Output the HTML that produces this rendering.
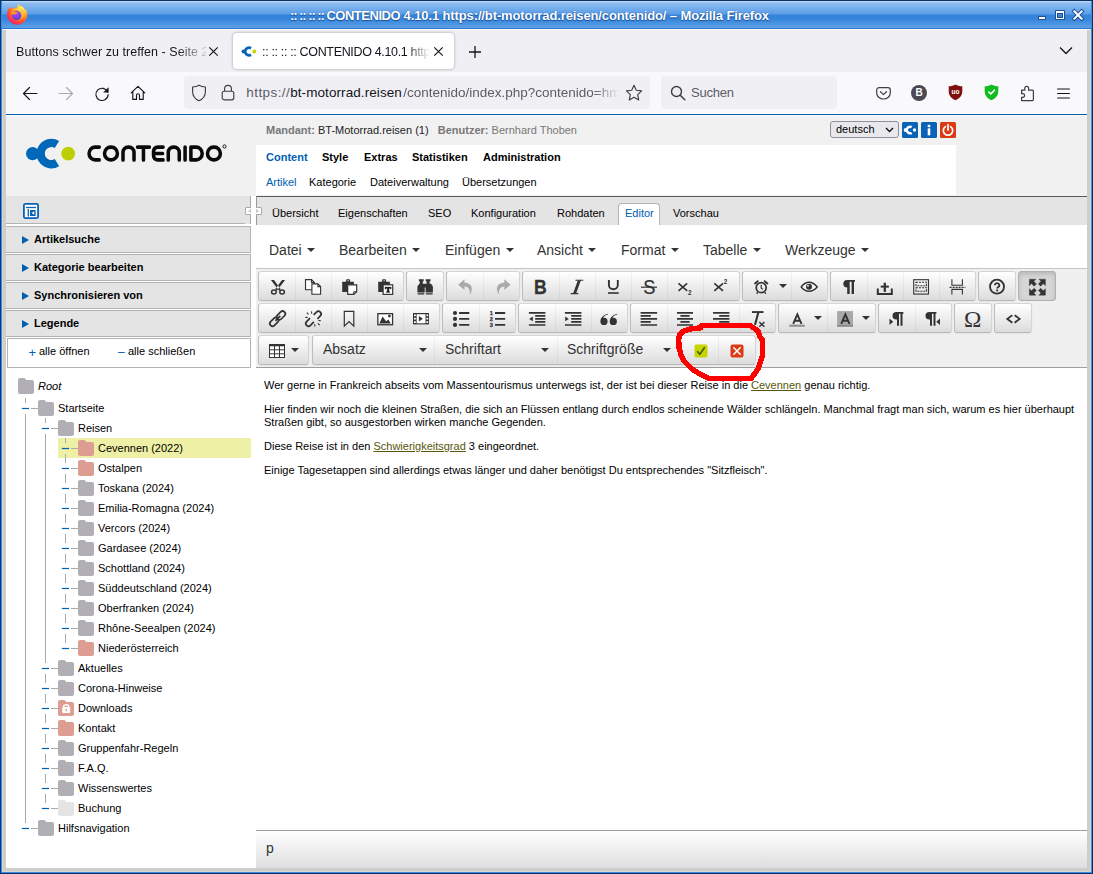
<!DOCTYPE html>
<html><head><meta charset="utf-8">
<style>
*{box-sizing:border-box;margin:0;padding:0}
html,body{width:1093px;height:874px;overflow:hidden;background:#fff;font-family:"Liberation Sans",sans-serif;}
.a{position:absolute}
#win{position:absolute;left:0;top:0;width:1093px;height:874px;background:#cdcdcd;overflow:hidden}
/* title bar */
#tb{left:0;top:0;width:1093px;height:30px;background:linear-gradient(#0b2f5e 0,#0b2f5e 1px,#cfe3f8 1px,#a5cbf4 2px,#8fbef1 3px,#5a9de8 14px,#3584db 15px,#3685dc 19px,#4d95e2 24px,#5e9fe6 28px,#2a7bd8 28px,#2a7bd8 29px,#fbf8f5 29px,#fbf8f5 30px)}
#ttl{left:290px;top:7px;text-align:left;color:#fff;font-weight:bold;font-size:13px;line-height:17px;text-shadow:0 1px 1px #1a4f94,0 0 1px #1a4f94;white-space:nowrap;letter-spacing:-.29px}
/* ff chrome */
#tabs{left:6px;top:30px;width:1081px;height:42px;background:#f0f0f4}
#nav{left:6px;top:72px;width:1081px;height:41px;background:#f9f9fb}
#navline{left:6px;top:113px;width:1081px;height:3px;background:linear-gradient(#fdfdfd 0,#fdfdfd 1px,#005bac 1px,#005bac 2px,#fdfbf7 2px);z-index:5}
.fft{font-size:13px;color:#15141a;white-space:nowrap;line-height:16px}
#atab{left:233px;top:33px;width:221px;height:36px;background:#fff;border-radius:4px;box-shadow:0 0 3px rgba(0,0,0,.36)}
#url{left:184px;top:76px;width:466px;height:33px;background:#f0f0f4;border-radius:4px}
#srch{left:661px;top:76px;width:176px;height:33px;background:#f0f0f4;border-radius:4px}
/* page */
#page{left:6px;top:115px;width:1081px;height:753px;background:#fff;overflow:hidden}

/* contenido */
#page{font-size:11px;color:#000}
#hdr{left:0;top:0;width:1081px;height:81px;background:#f1f1f1}
#hdrw{left:250px;top:30px;width:700px;height:50px;background:#fff}
.t11{font-size:11px;line-height:14px;white-space:nowrap}
.b{font-weight:bold}
.blue{color:#0060b1}
#lbar{left:0;top:81px;width:245px;height:28px;background:#e4e4e4}
.blk{left:0;width:245px;height:27px;background:#e4e4e4;border:1px solid #b3b3b3;border-left:0}
.blk i{position:absolute;left:16px;top:9px;width:0;height:0;border-left:7px solid #0060b1;border-top:4px solid transparent;border-bottom:4px solid transparent}
.blk b{position:absolute;left:28px;top:5px;font-size:11px;line-height:14px;white-space:nowrap}
#rtab{left:250px;top:81px;width:831px;height:29px;background:#e4e4e4;border-top:1px solid #5a5a5a;border-left:1px solid #9a9a9a}
.tab{top:91px;font-size:11px;line-height:14px;white-space:nowrap}
.fold{position:absolute;width:16px;height:16px}
.tl{position:absolute;font-size:11px;line-height:14px;white-space:nowrap;color:#000}
.vl{position:absolute;width:1px;background:#a9a9a9}
.hl{position:absolute;height:1px;background:#a9a9a9}
.mn{position:absolute;height:1px;width:7px;background:#0060b1;box-shadow:0 0 0 .3px rgba(0,96,177,.35)}

/* tinymce */
#mbar{left:250px;top:110px;width:831px;height:44px;background:#fff;border-bottom:1px solid #c5c5c5}
.mb{position:absolute;top:125px;font-size:14px;line-height:20px;color:#333;white-space:nowrap}
.car{display:inline-block;width:0;height:0;border-left:4px solid transparent;border-right:4px solid transparent;border-top:4px solid #333;vertical-align:top;margin-top:8px;margin-left:1.500px}
#tbar{left:250px;top:154px;width:831px;height:99px;background:#f0f0f0;border-bottom:1px solid #9e9e9e}
.g{position:absolute;height:30px;border:1px solid;border-color:#d5d5d5 #d5d5d5 #b8b8b8 #bcbcbc;border-radius:3px;background:linear-gradient(#fff,#dcdcdc);box-shadow:0 1px 2px rgba(0,0,0,.05);overflow:hidden}
.g u{position:absolute;top:0;width:1px;height:28px;background:rgba(0,0,0,.045)}
.ic{position:absolute;width:16px;height:16px;overflow:visible}
.lb{position:absolute;font-size:14px;line-height:20px;color:#333;white-space:nowrap}
.cr{position:absolute;width:0;height:0;border-left:4px solid transparent;border-right:4px solid transparent;border-top:4px solid #333}
#ed p{position:absolute;left:258px;font-size:11px;line-height:13px;white-space:nowrap;color:#000}
#ed p a{color:#55570a;text-decoration:underline}
#sbar{left:250px;top:715px;width:831px;height:38px;border-top:1px solid #9e9e9e;background:linear-gradient(#fff,#dedede)}
</style></head><body>
<div id="win">
<div id="tb" class="a"></div>
<div id="ttl" class="a"><span style="letter-spacing:-1.06px">:: :: :: :: </span><span style="letter-spacing:-.48px">CONTENIDO</span><span style="letter-spacing:-.118px"> 4.10.1 https://bt-motorrad.reisen/contenido/ – Mozilla Firefox</span></div>
<div id="tabs" class="a"></div>
<div id="nav" class="a"></div>
<div id="navline" class="a"></div>
<div id="atab" class="a"></div>
<div id="url" class="a"></div>
<div id="srch" class="a"></div>

<!-- firefox logo -->
<svg class="a" style="left:5px;top:3px" width="24" height="24" viewBox="0 0 24 24">
<defs>
<radialGradient id="fg1" cx="0.72" cy="0.18" r="0.95"><stop offset="0" stop-color="#fff36b"/><stop offset="0.3" stop-color="#ffbd2f"/><stop offset="0.55" stop-color="#ff7a24"/><stop offset="0.8" stop-color="#ff3647"/><stop offset="1" stop-color="#e31587"/></radialGradient>
<radialGradient id="fg2" cx="0.45" cy="0.3" r="0.7"><stop offset="0" stop-color="#b53ae8"/><stop offset="0.6" stop-color="#7a48f0"/><stop offset="1" stop-color="#5b2fc4"/></radialGradient>
</defs>
<path d="M13.3 1.2c-.9 1.3-1.3 2.5-1.1 3.9-1.3-.3-2.7-.1-3.8.5-.7-.5-1.1-1.200-1.200-2-.8.400-1.500 1.300-1.700 2.300-.4-.3-.7-.8-.8-1.300C2.900 6.500 1.900 9.200 2.100 12c.3 5.400 4.700 9.700 10.100 9.700 5.600 0 10.100-4.500 10.100-10.100 0-2.200-.7-4.300-2-5.900.2.800.2 1.500.1 2.200-.7-2.800-2.900-4.400-4.600-5.200-1.100-.5-2-1-2.500-1.500z" fill="url(#fg1)"/>
<circle cx="11.7" cy="12.4" r="4.600" fill="url(#fg2)"/>
<path d="M6.200 9.200c1.500-.6 3.500-.7 5.300-.1.900.3 1.700.8 2.300 1.400-1.300-.4-2.300-.2-3.200.4-.9.600-1.500.8-2.500.7-1-.1-1.700-.6-2.300-1.300.2-.4.300-.8.400-1.100z" fill="#ff9a1f"/>
<path d="M15.500 6.500c1.300 1.500 1.900 3.300 1.700 5.200-.2 2.400-1.700 4.300-3.800 5.100 3.100-.3 5.600-2.900 5.800-6 .1-1.700-.6-3.300-1.700-4.400-.6-.6-1.300-1.100-2-1.500z" fill="#ffbd2f" opacity=".7"/>
</svg>
<!-- window buttons -->
<div class="a" style="left:1038px;top:16px;width:8px;height:4px;background:#1d4f8f;border-radius:1px"></div>
<div class="a" style="left:1039px;top:17px;width:6px;height:2px;background:#fff"></div>
<div class="a" style="left:1055px;top:10px;width:10px;height:10px;background:#1d4f8f;border-radius:1px"></div>
<div class="a" style="left:1056px;top:11px;width:8px;height:8px;background:#fff"></div>
<div class="a" style="left:1057px;top:13px;width:6px;height:5px;background:#1d4f8f"></div>
<div class="a" style="left:1058px;top:14px;width:4px;height:3px;background:#3a86dd"></div>
<svg class="a" style="left:1071px;top:8px" width="14" height="14" viewBox="0 0 14 14"><path d="M3.300 3.300l7.400 7.400M10.700 3.300l-7.400 7.400" stroke="#1d4f8f" stroke-width="3.800" stroke-linecap="square"/><path d="M3.300 3.300l7.400 7.400M10.700 3.300l-7.400 7.400" stroke="#fff" stroke-width="2" stroke-linecap="square"/></svg>
<!-- tab 1 -->
<div class="a fft" style="left:16px;top:44px;width:190px;overflow:hidden;font-size:12.500px;letter-spacing:.05px;-webkit-mask-image:linear-gradient(90deg,#000 160px,transparent 188px);mask-image:linear-gradient(90deg,#000 160px,rgba(0,0,0,.15) 190px)">Buttons schwer zu treffen - Seite 2 von</div>
<svg class="a" style="left:208px;top:46px" width="11" height="11" viewBox="0 0 11 11"><path d="M1.300 1.300l8.400 8.400M9.700 1.300l-8.400 8.400" stroke="#15141a" stroke-width="1.200"/></svg>
<!-- tab2 content -->
<svg class="a" style="left:240.800px;top:45.200px" width="17" height="13" viewBox="0 0 17 13"><circle cx="2.600" cy="6.500" r="2.100" fill="#0a62b6"/><path d="M10.800 1.900A5.300 5.300 0 1 0 10.800 11.100L9.300 8.500A2.400 2.400 0 1 1 9.300 4.500z" fill="#0a62b6"/><circle cx="13.300" cy="6.500" r="1.900" fill="#c4d100"/></svg>
<div class="a fft" style="left:262px;top:44px;width:170px;overflow:hidden;font-size:12.500px;letter-spacing:-.34px;-webkit-mask-image:linear-gradient(90deg,#000 145px,transparent 168px);mask-image:linear-gradient(90deg,#000 145px,transparent 168px)">:: :: :: :: CONTENIDO 4.10.1 https://bt</div>
<svg class="a" style="left:433px;top:46px" width="11" height="11" viewBox="0 0 11 11"><path d="M1.300 1.300l8.400 8.400M9.700 1.300l-8.400 8.400" stroke="#15141a" stroke-width="1.200"/></svg>
<svg class="a" style="left:468px;top:45px" width="14" height="14" viewBox="0 0 14 14"><path d="M7 1v12M1 7h12" stroke="#15141a" stroke-width="1.300"/></svg>
<svg class="a" style="left:1059px;top:46px" width="14" height="9" viewBox="0 0 14 9"><path d="M1 1.500l6 6 6-6" stroke="#15141a" stroke-width="1.300" fill="none"/></svg>
<!-- nav icons -->
<svg class="a" style="left:22px;top:86px" width="16" height="15" viewBox="0 0 16 15"><path d="M15 7.500H1.500M7.500 1.500l-6 6 6 6" stroke="#15141a" stroke-width="1.150" fill="none" stroke-linecap="round" stroke-linejoin="round"/></svg>
<svg class="a" style="left:58px;top:86px" width="16" height="15" viewBox="0 0 16 15"><path d="M1 7.500h13.500M8.500 1.500l6 6-6 6" stroke="#a9a9af" stroke-width="1.150" fill="none" stroke-linecap="round" stroke-linejoin="round"/></svg>
<svg class="a" style="left:94px;top:86px" width="16" height="16" viewBox="0 0 16 16"><path d="M13.700 6.200A6.100 6.100 0 1 0 14.100 8.500" stroke="#15141a" stroke-width="1.150" fill="none" stroke-linecap="round"/><path d="M14.600 1.200v5.400H9.200z" fill="#15141a"/></svg>
<svg class="a" style="left:130px;top:85px" width="16" height="16" viewBox="0 0 16 16"><path d="M1.200 7.800L8 1.300l6.800 6.500M2.800 6.800v7.600h3.700V10.200a1.500 1.500 0 0 1 3 0v4.200h3.700V6.800" stroke="#15141a" stroke-width="1.150" fill="none" stroke-linejoin="round" stroke-linecap="round"/></svg>
<!-- url bar -->
<svg class="a" style="left:191px;top:84px" width="16" height="18" viewBox="0 0 16 18"><path d="M8 1.200C6 2.400 4 2.900 1.600 3v4.500c0 4.300 2.600 7.600 6.400 9.200 3.800-1.600 6.400-4.900 6.400-9.200V3C12 2.900 10 2.400 8 1.200z" stroke="#3d3d44" stroke-width="1.150" fill="none" stroke-linejoin="round"/></svg>
<svg class="a" style="left:221px;top:84px" width="14" height="17" viewBox="0 0 14 17"><rect x="1.200" y="7.200" width="11.600" height="8.600" rx="2" stroke="#3d3d44" stroke-width="1.150" fill="none"/><path d="M3.600 7V4.800a3.400 3.400 0 0 1 6.800 0V7" stroke="#3d3d44" stroke-width="1.150" fill="none"/></svg>
<div class="a" style="left:246.300px;top:84px;font-size:13.500px;line-height:18px;color:#5b5b66;white-space:nowrap;letter-spacing:.42px">https://</div>
<div class="a" style="left:290.200px;top:84px;font-size:13.500px;line-height:18px;color:#15141a;white-space:nowrap;letter-spacing:.08px">bt-motorrad.reisen</div>
<div class="a" style="left:403.200px;top:84px;font-size:13.500px;line-height:18px;color:#5b5b66;white-space:nowrap;width:218px;overflow:hidden;-webkit-mask-image:linear-gradient(90deg,#000 190px,transparent 217px);mask-image:linear-gradient(90deg,#000 190px,transparent 217px)">/contenido/index.php?contenido=hmf</div>
<svg class="a" style="left:625px;top:84px" width="18" height="17" viewBox="0 0 18 17"><path d="M9 1.300l2.300 4.900 5.300.7-3.900 3.700 1 5.300L9 13.300l-4.700 2.600 1-5.300L1.400 6.900l5.300-.7z" stroke="#3d3d44" stroke-width="1.150" fill="none" stroke-linejoin="round"/></svg>
<svg class="a" style="left:670px;top:85px" width="16" height="16" viewBox="0 0 16 16"><circle cx="6.500" cy="6.500" r="5" stroke="#3d3d44" stroke-width="1.400" fill="none"/><path d="M10.200 10.200l4.600 4.600" stroke="#3d3d44" stroke-width="1.500" stroke-linecap="round"/></svg>
<div class="a" style="left:691px;top:84px;font-size:13px;line-height:18px;color:#5b5b66;letter-spacing:-.2px">Suchen</div>
<!-- right toolbar icons -->
<svg class="a" style="left:875.500px;top:86.500px" width="15" height="13" viewBox="0 0 15 13"><path d="M3 .7h9A2.300 2.300 0 0 1 14.300 3v3a6.800 6 0 0 1-13.600 0V3A2.300 2.300 0 0 1 3 .7z" stroke="#3d3d44" stroke-width="1.200" fill="none"/><path d="M4.500 4.700L7.500 7.600l3-2.900" stroke="#3d3d44" stroke-width="1.200" fill="none" stroke-linecap="round" stroke-linejoin="round"/></svg>
<div class="a" style="left:911px;top:85px;width:16px;height:16px;border-radius:50%;background:#4a4a55;color:#fff;font-size:10px;font-weight:bold;line-height:16px;text-align:center">B</div>
<svg class="a" style="left:948px;top:84px" width="15" height="17" viewBox="0 0 15 17"><path d="M7.500.5C5.600 1.600 3.300 2.200.7 2.300v5c0 4.200 2.700 7.300 6.800 8.900 4.100-1.600 6.800-4.700 6.800-8.900v-5C11.700 2.200 9.400 1.600 7.500.5z" fill="#800f0f"/><text x="7.500" y="10.300" font-size="6.500" font-weight="bold" fill="#fff" text-anchor="middle" font-family="Liberation Sans">uo</text></svg>
<svg class="a" style="left:983.500px;top:84px" width="15" height="17" viewBox="0 0 15 17"><path d="M7.500.5C5.600 1.600 3.300 2.200.7 2.300v5c0 4.200 2.700 7.300 6.800 8.900 4.100-1.600 6.800-4.700 6.800-8.900v-5C11.700 2.200 9.400 1.600 7.500.5z" fill="#12bc1e"/><path d="M4.800 8l2 2 3.600-3.800" stroke="#fff" stroke-width="1.600" fill="none" stroke-linecap="round" stroke-linejoin="round"/></svg>
<svg class="a" style="left:1020px;top:84.500px" width="15" height="17" viewBox="0 0 15 17"><path d="M1.600 5.200h3.200V3.200a1.900 1.900 0 0 1 3.800 0v2h3.800a1 1 0 0 1 1 1v8.400a1 1 0 0 1-1 1H1.600v-3.300h1.200a1.800 1.800 0 0 0 0-3.600H1.600z" stroke="#3d3d44" stroke-width="1.200" fill="none" stroke-linejoin="round"/></svg>
<svg class="a" style="left:1057px;top:87.500px" width="13" height="11" viewBox="0 0 13 11"><path d="M.6 1h11.800M.6 5.500h11.800M.6 10h11.800" stroke="#15141a" stroke-width="1.200" stroke-linecap="round"/></svg>
<div id="page" class="a">
<div id="hdr" class="a"></div>
<div id="hdrw" class="a"></div>
<!-- logo -->
<svg class="a" style="left:19px;top:22px" width="204" height="32" viewBox="0 0 204 32">
<circle cx="7.600" cy="16.700" r="6.600" fill="#0068b9"/>
<path d="M34.140 4.050A14.800 14.800 0 1 0 34.140 29.150L29.740 22.110A6.500 6.500 0 1 1 29.740 11.090z" fill="#0068b9"/>
<circle cx="43.200" cy="16.600" r="6.900" fill="#bccf00"/>
<g fill="none" stroke="#0a0a0a" stroke-width="3.400" stroke-linecap="round" stroke-linejoin="round" transform="translate(62.300 16.500) scale(1.038 1.090) translate(-61 -16.500)">
<path d="M72.500 10.600H68.600a5.900 5.900 0 0 0 0 11.800h3.900"/>
<rect x="77.600" y="10.600" width="12.400" height="11.800" rx="5.900"/>
<path d="M95.400 22.400V15.600a5 5 0 0 1 5-5h.6a5 5 0 0 1 5 5v6.800"/>
<path d="M109.400 10.600h11.400M115.100 10.600v11.800"/>
<path d="M134 10.600h-5.200a4 4 0 0 0-4 4v3.800a4 4 0 0 0 4 4h5.200M125 16.500h8.500"/>
<path d="M139 22.400V15.600a5 5 0 0 1 5-5h.6a5 5 0 0 1 5 5v6.800"/>
<path d="M155.200 10.600v11.800"/>
<path d="M160.800 10.600h5a5.900 5.900 0 0 1 0 11.800h-5z"/>
<rect x="176.800" y="10.600" width="12.400" height="11.800" rx="5.900"/>
</g>
<circle cx="199.500" cy="9.500" r="1.600" fill="none" stroke="#111" stroke-width="1"/>
</svg>
<!-- header text -->
<div class="a t11" style="left:260px;top:8px;color:#777"><b>Mandant:</b> <span style="color:#222">BT-Motorrad.reisen (1)</span> &nbsp; <b>Benutzer:</b> Bernhard Thoben</div>
<div class="a" style="left:824px;top:6px;width:69px;height:17px;background:#e9e9ed;border:1px solid #8f8f9d;border-radius:3px"></div>
<div class="a t11" style="left:830px;top:7px;color:#000">deutsch</div>
<svg class="a" style="left:878.500px;top:12px" width="9" height="6" viewBox="0 0 9 6"><path d="M1 1l3.500 3.500L8 1" stroke="#111" stroke-width="1.400" fill="none"/></svg>
<svg class="a" style="left:896px;top:7px" width="16" height="16" viewBox="0 0 16 16"><rect width="16" height="16" rx="1.500" fill="#0a62b6"/><circle cx="3.700" cy="8" r="2" fill="#fff"/><path d="M10.400 4.100A4.500 4.500 0 1 0 10.400 11.900L9 9.700A2 2 0 1 1 9 6.300z" fill="#fff"/><circle cx="12.500" cy="8" r="1.700" fill="#fff"/></svg>
<svg class="a" style="left:915px;top:7px" width="16" height="16" viewBox="0 0 16 16"><rect width="16" height="16" rx="1.500" fill="#0a62b6"/><rect x="6.700" y="6.300" width="2.600" height="7" fill="#fff"/><rect x="6.700" y="2.800" width="2.600" height="2.400" fill="#fff"/></svg>
<svg class="a" style="left:934px;top:7px" width="16" height="16" viewBox="0 0 16 16"><rect width="16" height="16" rx="1.500" fill="#dc3a14"/><path d="M5.400 4.600A4.700 4.700 0 1 0 10.600 4.600" stroke="#fff" stroke-width="1.700" fill="none" stroke-linecap="round"/><path d="M8 2.600v5.400" stroke="#fff" stroke-width="1.700" stroke-linecap="round"/></svg>
<!-- menus -->
<div class="a t11 b" style="left:260px;top:35px"><span class="blue">Content</span></div>
<div class="a t11 b" style="left:316px;top:35px">Style</div>
<div class="a t11 b" style="left:358px;top:35px">Extras</div>
<div class="a t11 b" style="left:406px;top:35px">Statistiken</div>
<div class="a t11 b" style="left:477px;top:35px">Administration</div>
<div class="a t11 blue" style="left:260px;top:60px">Artikel</div>
<div class="a t11" style="left:303px;top:60px">Kategorie</div>
<div class="a t11" style="left:364px;top:60px">Dateiverwaltung</div>
<div class="a t11" style="left:456px;top:60px">Übersetzungen</div>
<!-- left bar -->
<div id="lbar" class="a"></div>
<div class="a" style="left:244px;top:81px;width:1px;height:28px;background:#a9a9af"></div><div class="a" style="left:0;top:108px;width:239px;height:1px;background:#b3b3b3"></div>
<svg class="a" style="left:17px;top:88px" width="16" height="16" viewBox="0 0 16 16"><rect x=".900" y=".900" width="14.200" height="14.200" rx="1.500" fill="#fff" stroke="#0a62b6" stroke-width="1.800"/><path d="M3 4.500h10" stroke="#0a62b6" stroke-width="1.300"/><path d="M5.300 6v7.500" stroke="#0a62b6" stroke-width="1.300"/><rect x="7" y="7" width="5.600" height="6" fill="#0a62b6"/><path d="M11.200 8.200v3.600L8.600 10z" fill="#fff"/></svg>
<div class="a blk" style="top:111px"><i></i><b>Artikelsuche</b></div>
<div class="a blk" style="top:139px"><i></i><b>Kategorie bearbeiten</b></div>
<div class="a blk" style="top:167px"><i></i><b>Synchronisieren von</b></div>
<div class="a blk" style="top:195px"><i></i><b>Legende</b></div>
<div class="a" style="left:1px;top:223px;width:244px;height:30px;background:#fff;border:1px solid #b3b3b3"></div>
<div class="a blue" style="left:22.500px;top:229.500px;font-size:13px;line-height:16px">+</div>
<div class="a t11" style="left:33px;top:229px">alle öffnen</div>
<div class="a blue" style="left:112px;top:228.500px;font-size:12px;line-height:16px">–</div>
<div class="a t11" style="left:122px;top:229px">alle schließen</div>
<!-- right tabs -->
<div id="rtab" class="a"></div>
<div class="a" style="left:239px;top:92px;width:17px;height:8px;background:#fff;border:1px solid #a9a9af;border-radius:1px"></div><div class="a" style="left:245px;top:81px;width:5px;height:29px;background:#fff"></div>
<div class="a" style="left:242px;top:94px;width:0;height:0;border-right:3px solid #c4c4c4;border-top:2px solid transparent;border-bottom:2px solid transparent"></div>
<div class="a" style="left:250px;top:94px;width:0;height:0;border-left:3px solid #c4c4c4;border-top:2px solid transparent;border-bottom:2px solid transparent"></div>
<div class="a tab" style="left:266px">Übersicht</div>
<div class="a tab" style="left:332px">Eigenschaften</div>
<div class="a tab" style="left:422px">SEO</div>
<div class="a tab" style="left:465px">Konfiguration</div>
<div class="a tab" style="left:551px">Rohdaten</div>
<div class="a" style="left:612px;top:88px;width:42px;height:23px;background:#fff;border:1px solid #b3b3b3;border-bottom:0;border-radius:4px 4px 0 0"></div>
<div class="a tab blue" style="left:619px">Editor</div>
<div class="a tab" style="left:667px">Vorschau</div>
<div class="a" style="left:52px;top:323px;width:193px;height:20px;background:#eef0a6"></div>
<svg class="fold" style="left:12px;top:263px" viewBox="0 0 16 16"><path d="M2 0h4.500l1.800 2H14a2 2 0 0 1 2 2v10a2 2 0 0 1-2 2H2a2 2 0 0 1-2-2V2a2 2 0 0 1 2-2z" fill="#b1afb5"/></svg>
<div class="tl" style="left:32px;top:264px;font-style:italic">Root</div>
<div class="vl" style="left:19px;top:283px;height:5px"></div>
<div class="vl" style="left:19px;top:299px;height:409px"></div>
<div class="vl" style="left:39px;top:303px;height:5px"></div>
<div class="vl" style="left:39px;top:319px;height:229px"></div>
<div class="vl" style="left:39px;top:559px;height:9px"></div>
<div class="vl" style="left:39px;top:579px;height:9px"></div>
<div class="vl" style="left:39px;top:599px;height:9px"></div>
<div class="vl" style="left:39px;top:619px;height:9px"></div>
<div class="vl" style="left:39px;top:639px;height:9px"></div>
<div class="vl" style="left:39px;top:659px;height:9px"></div>
<div class="vl" style="left:39px;top:679px;height:9px"></div>
<div class="vl" style="left:59px;top:323px;height:5px"></div>
<div class="vl" style="left:59px;top:339px;height:9px"></div>
<div class="vl" style="left:59px;top:359px;height:9px"></div>
<div class="vl" style="left:59px;top:379px;height:9px"></div>
<div class="vl" style="left:59px;top:399px;height:9px"></div>
<div class="vl" style="left:59px;top:419px;height:9px"></div>
<div class="vl" style="left:59px;top:439px;height:9px"></div>
<div class="vl" style="left:59px;top:459px;height:9px"></div>
<div class="vl" style="left:59px;top:479px;height:9px"></div>
<div class="vl" style="left:59px;top:499px;height:9px"></div>
<div class="vl" style="left:59px;top:519px;height:9px"></div>
<div class="mn" style="left:16px;top:293px"></div>
<div class="hl" style="left:25px;top:293px;width:7px"></div>
<svg class="fold" style="left:32px;top:285px" viewBox="0 0 16 16"><path d="M2 0h4.500l1.800 2H14a2 2 0 0 1 2 2v10a2 2 0 0 1-2 2H2a2 2 0 0 1-2-2V2a2 2 0 0 1 2-2z" fill="#b1afb5"/></svg>
<div class="tl" style="left:52px;top:286px">Startseite</div>
<div class="mn" style="left:36px;top:313px"></div>
<div class="hl" style="left:45px;top:313px;width:7px"></div>
<svg class="fold" style="left:52px;top:305px" viewBox="0 0 16 16"><path d="M2 0h4.500l1.800 2H14a2 2 0 0 1 2 2v10a2 2 0 0 1-2 2H2a2 2 0 0 1-2-2V2a2 2 0 0 1 2-2z" fill="#b1afb5"/></svg>
<div class="tl" style="left:72px;top:306px">Reisen</div>
<div class="mn" style="left:56px;top:333px"></div>
<div class="hl" style="left:65px;top:333px;width:7px"></div>
<svg class="fold" style="left:72px;top:325px" viewBox="0 0 16 16"><path d="M2 0h4.500l1.800 2H14a2 2 0 0 1 2 2v10a2 2 0 0 1-2 2H2a2 2 0 0 1-2-2V2a2 2 0 0 1 2-2z" fill="#dd9d93"/></svg>
<div class="tl" style="left:92px;top:326px">Cevennen (2022)</div>
<div class="mn" style="left:56px;top:353px"></div>
<div class="hl" style="left:65px;top:353px;width:7px"></div>
<svg class="fold" style="left:72px;top:345px" viewBox="0 0 16 16"><path d="M2 0h4.500l1.800 2H14a2 2 0 0 1 2 2v10a2 2 0 0 1-2 2H2a2 2 0 0 1-2-2V2a2 2 0 0 1 2-2z" fill="#dd9d93"/></svg>
<div class="tl" style="left:92px;top:346px">Ostalpen</div>
<div class="mn" style="left:56px;top:373px"></div>
<div class="hl" style="left:65px;top:373px;width:7px"></div>
<svg class="fold" style="left:72px;top:365px" viewBox="0 0 16 16"><path d="M2 0h4.500l1.800 2H14a2 2 0 0 1 2 2v10a2 2 0 0 1-2 2H2a2 2 0 0 1-2-2V2a2 2 0 0 1 2-2z" fill="#b1afb5"/></svg>
<div class="tl" style="left:92px;top:366px">Toskana (2024)</div>
<div class="mn" style="left:56px;top:393px"></div>
<div class="hl" style="left:65px;top:393px;width:7px"></div>
<svg class="fold" style="left:72px;top:385px" viewBox="0 0 16 16"><path d="M2 0h4.500l1.800 2H14a2 2 0 0 1 2 2v10a2 2 0 0 1-2 2H2a2 2 0 0 1-2-2V2a2 2 0 0 1 2-2z" fill="#b1afb5"/></svg>
<div class="tl" style="left:92px;top:386px">Emilia-Romagna (2024)</div>
<div class="mn" style="left:56px;top:413px"></div>
<div class="hl" style="left:65px;top:413px;width:7px"></div>
<svg class="fold" style="left:72px;top:405px" viewBox="0 0 16 16"><path d="M2 0h4.500l1.800 2H14a2 2 0 0 1 2 2v10a2 2 0 0 1-2 2H2a2 2 0 0 1-2-2V2a2 2 0 0 1 2-2z" fill="#b1afb5"/></svg>
<div class="tl" style="left:92px;top:406px">Vercors (2024)</div>
<div class="mn" style="left:56px;top:433px"></div>
<div class="hl" style="left:65px;top:433px;width:7px"></div>
<svg class="fold" style="left:72px;top:425px" viewBox="0 0 16 16"><path d="M2 0h4.500l1.800 2H14a2 2 0 0 1 2 2v10a2 2 0 0 1-2 2H2a2 2 0 0 1-2-2V2a2 2 0 0 1 2-2z" fill="#b1afb5"/></svg>
<div class="tl" style="left:92px;top:426px">Gardasee (2024)</div>
<div class="mn" style="left:56px;top:453px"></div>
<div class="hl" style="left:65px;top:453px;width:7px"></div>
<svg class="fold" style="left:72px;top:445px" viewBox="0 0 16 16"><path d="M2 0h4.500l1.800 2H14a2 2 0 0 1 2 2v10a2 2 0 0 1-2 2H2a2 2 0 0 1-2-2V2a2 2 0 0 1 2-2z" fill="#b1afb5"/></svg>
<div class="tl" style="left:92px;top:446px">Schottland (2024)</div>
<div class="mn" style="left:56px;top:473px"></div>
<div class="hl" style="left:65px;top:473px;width:7px"></div>
<svg class="fold" style="left:72px;top:465px" viewBox="0 0 16 16"><path d="M2 0h4.500l1.800 2H14a2 2 0 0 1 2 2v10a2 2 0 0 1-2 2H2a2 2 0 0 1-2-2V2a2 2 0 0 1 2-2z" fill="#b1afb5"/></svg>
<div class="tl" style="left:92px;top:466px">Süddeutschland (2024)</div>
<div class="mn" style="left:56px;top:493px"></div>
<div class="hl" style="left:65px;top:493px;width:7px"></div>
<svg class="fold" style="left:72px;top:485px" viewBox="0 0 16 16"><path d="M2 0h4.500l1.800 2H14a2 2 0 0 1 2 2v10a2 2 0 0 1-2 2H2a2 2 0 0 1-2-2V2a2 2 0 0 1 2-2z" fill="#b1afb5"/></svg>
<div class="tl" style="left:92px;top:486px">Oberfranken (2024)</div>
<div class="mn" style="left:56px;top:513px"></div>
<div class="hl" style="left:65px;top:513px;width:7px"></div>
<svg class="fold" style="left:72px;top:505px" viewBox="0 0 16 16"><path d="M2 0h4.500l1.800 2H14a2 2 0 0 1 2 2v10a2 2 0 0 1-2 2H2a2 2 0 0 1-2-2V2a2 2 0 0 1 2-2z" fill="#b1afb5"/></svg>
<div class="tl" style="left:92px;top:506px">Rhône-Seealpen (2024)</div>
<div class="mn" style="left:56px;top:533px"></div>
<div class="hl" style="left:65px;top:533px;width:7px"></div>
<svg class="fold" style="left:72px;top:525px" viewBox="0 0 16 16"><path d="M2 0h4.500l1.800 2H14a2 2 0 0 1 2 2v10a2 2 0 0 1-2 2H2a2 2 0 0 1-2-2V2a2 2 0 0 1 2-2z" fill="#dd9d93"/></svg>
<div class="tl" style="left:92px;top:526px">Niederösterreich</div>
<div class="mn" style="left:36px;top:553px"></div>
<div class="hl" style="left:45px;top:553px;width:7px"></div>
<svg class="fold" style="left:52px;top:545px" viewBox="0 0 16 16"><path d="M2 0h4.500l1.800 2H14a2 2 0 0 1 2 2v10a2 2 0 0 1-2 2H2a2 2 0 0 1-2-2V2a2 2 0 0 1 2-2z" fill="#b1afb5"/></svg>
<div class="tl" style="left:72px;top:546px">Aktuelles</div>
<div class="mn" style="left:36px;top:573px"></div>
<div class="hl" style="left:45px;top:573px;width:7px"></div>
<svg class="fold" style="left:52px;top:565px" viewBox="0 0 16 16"><path d="M2 0h4.500l1.800 2H14a2 2 0 0 1 2 2v10a2 2 0 0 1-2 2H2a2 2 0 0 1-2-2V2a2 2 0 0 1 2-2z" fill="#b1afb5"/></svg>
<div class="tl" style="left:72px;top:566px">Corona-Hinweise</div>
<div class="mn" style="left:36px;top:593px"></div>
<div class="hl" style="left:45px;top:593px;width:7px"></div>
<svg class="fold" style="left:52px;top:585px" viewBox="0 0 16 16"><path d="M2 0h4.500l1.800 2H14a2 2 0 0 1 2 2v10a2 2 0 0 1-2 2H2a2 2 0 0 1-2-2V2a2 2 0 0 1 2-2z" fill="#dd9d93"/><rect x="4.200" y="7" width="8" height="5.900" rx=".8" fill="#fff"/><path d="M5.600 7.500V6.900a2.600 2.100 0 0 1 5.200 0v.6" stroke="#fff" stroke-width="1.400" fill="none"/><rect x="7.500" y="8.900" width="1.400" height="2.400" fill="#dd9d93"/></svg>
<div class="tl" style="left:72px;top:586px">Downloads</div>
<div class="mn" style="left:36px;top:613px"></div>
<div class="hl" style="left:45px;top:613px;width:7px"></div>
<svg class="fold" style="left:52px;top:605px" viewBox="0 0 16 16"><path d="M2 0h4.500l1.800 2H14a2 2 0 0 1 2 2v10a2 2 0 0 1-2 2H2a2 2 0 0 1-2-2V2a2 2 0 0 1 2-2z" fill="#dd9d93"/></svg>
<div class="tl" style="left:72px;top:606px">Kontakt</div>
<div class="mn" style="left:36px;top:633px"></div>
<div class="hl" style="left:45px;top:633px;width:7px"></div>
<svg class="fold" style="left:52px;top:625px" viewBox="0 0 16 16"><path d="M2 0h4.500l1.800 2H14a2 2 0 0 1 2 2v10a2 2 0 0 1-2 2H2a2 2 0 0 1-2-2V2a2 2 0 0 1 2-2z" fill="#b1afb5"/></svg>
<div class="tl" style="left:72px;top:626px">Gruppenfahr-Regeln</div>
<div class="mn" style="left:36px;top:653px"></div>
<div class="hl" style="left:45px;top:653px;width:7px"></div>
<svg class="fold" style="left:52px;top:645px" viewBox="0 0 16 16"><path d="M2 0h4.500l1.800 2H14a2 2 0 0 1 2 2v10a2 2 0 0 1-2 2H2a2 2 0 0 1-2-2V2a2 2 0 0 1 2-2z" fill="#b1afb5"/></svg>
<div class="tl" style="left:72px;top:646px">F.A.Q.</div>
<div class="mn" style="left:36px;top:673px"></div>
<div class="hl" style="left:45px;top:673px;width:7px"></div>
<svg class="fold" style="left:52px;top:665px" viewBox="0 0 16 16"><path d="M2 0h4.500l1.800 2H14a2 2 0 0 1 2 2v10a2 2 0 0 1-2 2H2a2 2 0 0 1-2-2V2a2 2 0 0 1 2-2z" fill="#b1afb5"/></svg>
<div class="tl" style="left:72px;top:666px">Wissenswertes</div>
<div class="mn" style="left:36px;top:693px"></div>
<div class="hl" style="left:45px;top:693px;width:7px"></div>
<svg class="fold" style="left:52px;top:685px" viewBox="0 0 16 16"><path d="M2 0h4.500l1.800 2H14a2 2 0 0 1 2 2v10a2 2 0 0 1-2 2H2a2 2 0 0 1-2-2V2a2 2 0 0 1 2-2z" fill="#e4e4e4"/></svg>
<div class="tl" style="left:72px;top:686px">Buchung</div>
<div class="mn" style="left:16px;top:713px"></div>
<div class="hl" style="left:25px;top:713px;width:7px"></div>
<svg class="fold" style="left:32px;top:705px" viewBox="0 0 16 16"><path d="M2 0h4.500l1.800 2H14a2 2 0 0 1 2 2v10a2 2 0 0 1-2 2H2a2 2 0 0 1-2-2V2a2 2 0 0 1 2-2z" fill="#b1afb5"/></svg>
<div class="tl" style="left:52px;top:706px">Hilfsnavigation</div>

<div id="mbar" class="a"></div>
<div class="mb" style="left:263px">Datei <i class="car"></i></div>
<div class="mb" style="left:333px">Bearbeiten <i class="car"></i></div>
<div class="mb" style="left:439px">Einfügen <i class="car"></i></div>
<div class="mb" style="left:531px">Ansicht <i class="car"></i></div>
<div class="mb" style="left:615px">Format <i class="car"></i></div>
<div class="mb" style="left:697px">Tabelle <i class="car"></i></div>
<div class="mb" style="left:779px">Werkzeuge <i class="car"></i></div>
<div id="tbar" class="a"></div>
<div class="g" style="left:252px;top:156px;width:146px"><u style="left:36px"></u><u style="left:72px"></u><u style="left:108px"></u></div>
<div class="g" style="left:400px;top:156px;width:38px"></div>
<div class="g" style="left:440px;top:156px;width:74px"><u style="left:36px"></u></div>
<div class="g" style="left:516px;top:156px;width:218px"><u style="left:36px"></u><u style="left:72px"></u><u style="left:108px"></u><u style="left:144px"></u><u style="left:180px"></u></div>
<div class="g" style="left:736px;top:156px;width:86px"><u style="left:48px"></u></div>
<div class="g" style="left:824px;top:156px;width:146px"><u style="left:36px"></u><u style="left:72px"></u><u style="left:108px"></u></div>
<div class="g" style="left:972px;top:156px;width:38px"></div>
<div class="g" style="left:1012px;top:156px;width:38px;background:#d6d6d6;border-color:#b0b0b0;box-shadow:inset 0 2px 4px rgba(0,0,0,.15)"></div>
<div class="g" style="left:252px;top:188px;width:182px"><u style="left:36px"></u><u style="left:72px"></u><u style="left:108px"></u><u style="left:144px"></u></div>
<div class="g" style="left:436px;top:188px;width:74px"><u style="left:36px"></u></div>
<div class="g" style="left:512px;top:188px;width:110px"><u style="left:36px"></u><u style="left:72px"></u></div>
<div class="g" style="left:624px;top:188px;width:146px"><u style="left:36px"></u><u style="left:72px"></u><u style="left:108px"></u></div>
<div class="g" style="left:772px;top:188px;width:98px"><u style="left:48px"></u></div>
<div class="g" style="left:872px;top:188px;width:74px"><u style="left:36px"></u></div>
<div class="g" style="left:948px;top:188px;width:38px"></div>
<div class="g" style="left:988px;top:188px;width:38px"></div>
<div class="g" style="left:252px;top:220px;width:51px"></div>
<div class="g" style="left:306px;top:220px;width:444px"><u style="left:121px"></u><u style="left:244px"></u><u style="left:367px"></u><u style="left:405px"></u></div>
<!--ICONS_START--><svg class="ic" style="left:263px;top:164px" width="16" height="16" viewBox="0 0 16 16"><path d="M1.900 1h3.100l6.800 9.300-1.700 1.400zM16.100 1h-3.100L6.200 10.300l1.700 1.400z" fill="#333"/><ellipse cx="4.900" cy="12.900" rx="2.300" ry="2" stroke="#333" stroke-width="1.500" fill="none"/><ellipse cx="13.100" cy="12.900" rx="2.300" ry="2" stroke="#333" stroke-width="1.500" fill="none"/></svg>
<svg class="ic" style="left:299px;top:164px" width="16" height="16" viewBox="0 0 16 16"><path d="M.5.600h6l2.900 2.900v7.300H.5z" fill="#fdfdfd" stroke="#333" stroke-width="1.100"/><path d="M6.500.600v2.900h2.900" fill="none" stroke="#333" stroke-width="1.100"/><path d="M6.900 4.900h6l2.700 2.700v7.700H6.900z" fill="#fdfdfd" stroke="#333" stroke-width="1.100"/><path d="M12.900 4.900v2.700h2.700" fill="none" stroke="#333" stroke-width="1.100"/></svg>
<svg class="ic" style="left:335px;top:164px" width="16" height="16" viewBox="0 0 16 16"><path d="M1.200 2.800h3.900V1.300a1 1 0 0 1 1-1h2a1 1 0 0 1 1 1v1.500h3.800v10.100H1.200z" fill="#333"/><circle cx="7.100" cy="1.700" r=".65" fill="#eee"/><path d="M6.700 5.800h9v7l-3 2.600h-6z" fill="#fff" stroke="#333" stroke-width="1.200"/><path d="M15.700 12.800h-3v2.600" fill="none" stroke="#333" stroke-width="1"/></svg>
<svg class="ic" style="left:371px;top:164px" width="16" height="16" viewBox="0 0 16 16"><path d="M1.200 2.800h3.900V1.300a1 1 0 0 1 1-1h2a1 1 0 0 1 1 1v1.500h3.800v10.100H1.200z" fill="#333"/><circle cx="7.100" cy="1.700" r=".65" fill="#eee"/><rect x="6.100" y="5.800" width="9.600" height="9.600" fill="#fff" stroke="#333" stroke-width="1.200"/><path d="M8 8.100h6.200v2h-.8l-.3-.9h-1v3.200l.8.300v.700H9.300v-.7l.8-.3V9.200h-1l-.3.900H8z" fill="#222" stroke="#222" stroke-width=".35"/></svg>
<svg class="ic" style="left:411px;top:164px" width="16" height="16" viewBox="0 0 16 16"><path d="M1.900.3h4.800v2h-.9v2.400h3.800V2.300h-.9v-2h4.800v2h-.9v2.400h1.500L15.900 7.500v6.100H8.600V8.600H7.700v5H.4V7.500L2.200 4.700h.6V2.300h-.9z" fill="#333"/><rect x=".7" y="14.200" width="6.600" height="1.300" fill="#333"/><rect x="9" y="14.200" width="6.600" height="1.300" fill="#333"/></svg>
<svg class="ic" style="left:451px;top:164px" width="16" height="16" viewBox="0 0 16 16"><path d="M1.200 5.700L7.500.3V3.700C12 3.700 15 6 14.800 10c-.1 2.500-1 4.200-1.900 5.400C13.200 11 11.500 7.600 7.500 7.600V11z" fill="#aaa"/></svg>
<svg class="ic" style="left:487px;top:164px" width="16" height="16" viewBox="0 0 16 16"><g transform="translate(18.800 0) scale(-1 1)"><path d="M1.200 5.700L7.500.3V3.700C12 3.700 15 6 14.800 10c-.1 2.500-1 4.200-1.900 5.400C13.200 11 11.500 7.600 7.500 7.600V11z" fill="#aaa"/></g></svg>
<svg class="ic" style="left:527px;top:164px" width="16" height="16" viewBox="0 0 16 16"><text transform="translate(1.100 14.900) scale(.89 1)" font-family="Liberation Sans" font-weight="bold" font-size="19.800" fill="#333" stroke="#333" stroke-width=".3">B</text></svg>
<svg class="ic" style="left:563px;top:164px" width="16" height="16" viewBox="0 0 16 16"><path d="M8.900 1.200h3L7 14.800H4z" fill="#333"/><path d="M6.500.7h7.800v1.100H6.500zM1.700 14.100h7.700v1.100H1.700z" fill="#333"/></svg>
<svg class="ic" style="left:599px;top:164px" width="16" height="16" viewBox="0 0 16 16"><path d="M3.900 1V6a4.450 4.200 0 0 0 8.900 0V1" fill="none" stroke="#333" stroke-width="1.900"/><rect x="3" y="13.200" width="10.700" height="1.600" fill="#333"/></svg>
<svg class="ic" style="left:635px;top:164px" width="16" height="16" viewBox="0 0 16 16"><text transform="translate(2.300 14.700) scale(.93 1)" font-family="Liberation Sans" font-size="19.600" fill="#333" stroke="#333" stroke-width=".2">S</text><rect x="0" y="7.600" width="16" height="1.200" fill="#333"/></svg>
<svg class="ic" style="left:671px;top:164px" width="16" height="16" viewBox="0 0 16 16"><path d="M1.500 4.300l8.700 7.600M10.200 4.300l-8.700 7.600" stroke="#333" stroke-width="1.600" fill="none"/><text x="10.900" y="15.900" font-family="Liberation Sans" font-weight="bold" font-size="6.300" fill="#333">2</text></svg>
<svg class="ic" style="left:707px;top:164px" width="16" height="16" viewBox="0 0 16 16"><path d="M1.300 4.300l8.700 7.600M10 4.300l-8.700 7.600" stroke="#333" stroke-width="1.600" fill="none"/><text x="10.800" y="4.700" font-family="Liberation Sans" font-weight="bold" font-size="6.300" fill="#333">2</text></svg>
<svg class="ic" style="left:747px;top:164px" width="16" height="16" viewBox="0 0 16 16"><circle cx="8.200" cy="8.700" r="5" stroke="#333" stroke-width="1.700" fill="none"/><path d="M8.200 5.800v3.100l1.600 1.500" stroke="#333" stroke-width="1.200" fill="none"/><path d="M2 4.400L4.700 2.200M11.700 2.200l2.700 2.200" stroke="#333" stroke-width="1.900" stroke-linecap="round"/><path d="M4.600 13.400L3.700 14.800M11.800 13.400l.9 1.400" stroke="#333" stroke-width="1.400"/></svg>
<svg class="ic" style="left:795px;top:164px" width="16" height="16" viewBox="0 0 16 16"><path d="M.2 8C2.800 4.300 5.600 3.200 8.100 3.200S13.400 4.300 16.200 8C13.400 11.300 10.600 12.200 8.100 12.200S2.800 11.300.2 8z" stroke="#333" stroke-width="1.400" fill="#f4f4f4"/><circle cx="8" cy="7.800" r="3" fill="#333"/><circle cx="7" cy="6.800" r="1" fill="#ddd"/></svg>
<div class="cr" style="left:772.5px;top:169px"></div>
<svg class="ic" style="left:835px;top:164px" width="16" height="16" viewBox="0 0 16 16"><path d="M6.200 1H14V2.700H13V14.900H10.600V2.700H8.700V14.900H6.200V8.600A3.900 3.800 0 0 1 6.200 1z" fill="#333"/></svg>
<svg class="ic" style="left:871px;top:164px" width="16" height="16" viewBox="0 0 16 16"><path d="M.8 9.500V14.900H14.800V9.500" stroke="#333" stroke-width="2" fill="none"/><path d="M7.800 3.700V12.900" stroke="#333" stroke-width="2.300" fill="none"/><path d="M3.700 7.600H11.900" stroke="#333" stroke-width="2" fill="none"/></svg>
<svg class="ic" style="left:907px;top:164px" width="16" height="16" viewBox="0 0 16 16"><rect x=".7" y=".7" width="14.800" height="14.400" fill="none" stroke="#333" stroke-width="1.100"/><rect x="3" y="3.300" width="10.500" height="3.400" fill="none" stroke="#333" stroke-width="1.100" stroke-dasharray="2 1"/><rect x="3" y="8.800" width="10.500" height="3.400" fill="none" stroke="#333" stroke-width="1.100" stroke-dasharray="2 1"/></svg>
<svg class="ic" style="left:943px;top:164px" width="16" height="16" viewBox="0 0 16 16"><path d="M2.900.2V6.300H13.400V.2M2.900 15.600V10.400H13.400V15.600" stroke="#333" stroke-width="1.100" fill="none"/><path d="M.6 8.350h15.800" stroke="#333" stroke-width="1.100" stroke-dasharray="2 1"/></svg>
<svg class="ic" style="left:983px;top:164px" width="16" height="16" viewBox="0 0 16 16"><circle cx="8" cy="7.700" r="7" stroke="#333" stroke-width="1.800" fill="none"/><path d="M5.800 6.200a2.300 2 0 1 1 3.500 1.700c-.8.500-1.100.9-1.100 1.700" stroke="#333" stroke-width="1.800" fill="none"/><rect x="7.200" y="10.500" width="1.900" height="1.800" fill="#333"/></svg>
<svg class="ic" style="left:1023px;top:164px" width="16" height="16" viewBox="0 0 16 16"><g transform="translate(.4 .2)"><path d="M0 0h6.500L4.400 2.100 7 4.700 4.700 7 2.100 4.400 0 6.500zM16 0v6.500L13.900 4.400 11.300 7 9 4.700 11.600 2.100 9.500 0zM0 16V9.500L2.100 11.600 4.700 9 7 11.300 4.400 13.900 6.500 16zM16 16H9.500L11.600 13.900 9 11.300 11.300 9 13.900 11.600 16 9.500z" fill="#333" stroke="#333" stroke-width=".4"/></g></svg>
<svg class="ic" style="left:263px;top:196px" width="16" height="16" viewBox="0 0 16 16"><g transform="rotate(-45 8 8)" fill="none" stroke="#333" stroke-width="1.700"><rect x="-1" y="5.300" width="10" height="5.400" rx="2.700"/><rect x="8.300" y="5.600" width="10" height="5.400" rx="2.700"/><path d="M5.500 8.200h7"/></g></svg>
<svg class="ic" style="left:299px;top:196px" width="16" height="16" viewBox="0 0 16 16"><g transform="rotate(-45 8 8)" fill="none" stroke="#333" stroke-width="1.700"><path d="M6.500 5.300H1.700a2.700 2.700 0 0 0 0 5.400h4.800M11.300 5.600h4a2.700 2.700 0 0 1 0 5.400h-4"/></g><path d="M1.900 1.700l1.600 1.600M6.500.4l.2 2.300M.3 6.400l2.500.1M13.400 9.500l2.300.1M9.700 13.300l.2 2.200M12.800 12.300l1.900 1.900" stroke="#333" stroke-width="1.100"/></svg>
<svg class="ic" style="left:335px;top:196px" width="16" height="16" viewBox="0 0 16 16"><path d="M3.300.4H12.800V15.200L8.050 10.600 3.300 15.200z" fill="none" stroke="#333" stroke-width="1.200"/></svg>
<svg class="ic" style="left:371px;top:196px" width="16" height="16" viewBox="0 0 16 16"><rect x=".85" y="2.650" width="14.700" height="11.100" fill="#fff" stroke="#333" stroke-width="1.300"/><path d="M2.300 12.400L5.600 5.400l3.500 4.800 2.300-1.700 2.400 3.900z" fill="#333"/><circle cx="12.400" cy="5.100" r="1.400" fill="#333"/></svg>
<svg class="ic" style="left:407px;top:196px" width="16" height="16" viewBox="0 0 16 16"><rect x="0" y="2" width="16" height="11.400" fill="#333"/><rect x="3.600" y="3.200" width="8.900" height="9.100" fill="#fff"/><path d="M5.900 5.100v5.400l4-2.700z" fill="#333"/><g fill="#fff"><rect x="1" y="3.400" width="1.800" height="1.800"/><rect x="1" y="6.800" width="1.800" height="1.800"/><rect x="1" y="10.200" width="1.800" height="1.800"/><rect x="13.400" y="3.400" width="1.800" height="1.800"/><rect x="13.400" y="6.800" width="1.800" height="1.800"/><rect x="13.400" y="10.200" width="1.800" height="1.800"/></g></svg>
<svg class="ic" style="left:447px;top:196px" width="16" height="16" viewBox="0 0 16 16"><circle cx="2" cy="2" r="2.100" fill="#333"/><circle cx="2" cy="7.950" r="2.100" fill="#333"/><circle cx="2" cy="13.900" r="2.100" fill="#333"/><path d="M6.100 2H16.300M6.100 7.950H16.300M6.100 13.900H16.300" stroke="#333" stroke-width="1.800"/></svg>
<svg class="ic" style="left:483px;top:196px" width="16" height="16" viewBox="0 0 16 16"><path d="M6 2H16.200M6 7.950H16.200M6 13.900H16.200" stroke="#333" stroke-width="1.800"/><g font-family="Liberation Sans" font-weight="bold" font-size="5.700" fill="#333" stroke="#333" stroke-width=".25"><text x=".7" y="3.900">1</text><text x=".7" y="9.800">2</text><text x=".7" y="15.900">3</text></g></svg>
<svg class="ic" style="left:523px;top:196px" width="16" height="16" viewBox="0 0 16 16"><path d="M-.1 1.800h16.500M6.200 4.850h10.200M6.200 7.900h10.200M6.200 10.950h10.200M-.1 14h16.500" stroke="#333" stroke-width="1.700"/><path d="M3.800 5.600v4.700L.2 7.950z" fill="#333"/></svg>
<svg class="ic" style="left:559px;top:196px" width="16" height="16" viewBox="0 0 16 16"><path d="M-.1 1.800h16.500M6.200 4.850h10.200M6.200 7.900h10.200M6.200 10.950h10.200M-.1 14h16.500" stroke="#333" stroke-width="1.700"/><path d="M.2 5.600v4.700l3.600-2.350z" fill="#333"/></svg>
<svg class="ic" style="left:595px;top:196px" width="16" height="16" viewBox="0 0 16 16"><path d="M7 2.800C3 3.800-.6 6.600-.6 10.400a3.600 3.600 0 1 0 3.600-3.600c-.3 0-.5 0-.8.100C2.800 5.400 4.400 4.200 7 3.600z" fill="#333"/><g transform="translate(9.300 0)"><path d="M7 2.800C3 3.800-.6 6.600-.6 10.400a3.600 3.600 0 1 0 3.600-3.600c-.3 0-.5 0-.8.100C2.800 5.400 4.400 4.200 7 3.600z" fill="#333"/></g></svg>
<svg class="ic" style="left:635px;top:196px" width="16" height="16" viewBox="0 0 16 16"><path d="M-.4 1.800h16.500M-.4 4.850H9.800M-.4 7.900h16.500M-.4 10.950H9.800M-.4 14h16.500" stroke="#333" stroke-width="1.700"/></svg>
<svg class="ic" style="left:671px;top:196px" width="16" height="16" viewBox="0 0 16 16"><path d="M0 1.800h16M3.400 4.850h9.200M0 7.900h16M3.400 10.950h9.200M0 14h16" stroke="#333" stroke-width="1.700"/></svg>
<svg class="ic" style="left:707px;top:196px" width="16" height="16" viewBox="0 0 16 16"><path d="M0 1.800h16.400M6.200 4.850h10.200M0 7.900h16.400M6.200 10.950h10.200M0 14h16.400" stroke="#333" stroke-width="1.700"/></svg>
<svg class="ic" style="left:743px;top:196px" width="16" height="16" viewBox="0 0 16 16"><path d="M2.900 1.050h11.600" stroke="#333" stroke-width="1.900"/><path d="M9.400 1.200L6 13.700" stroke="#333" stroke-width="2.100"/><path d="M10.300 10.900l5.100 4.900M15.400 10.900l-5.100 4.900" stroke="#333" stroke-width="1.400"/></svg>
<svg class="ic" style="left:783px;top:196px" width="16" height="16" viewBox="0 0 16 16"><path d="M4.200 12.900L8.350 3.300l4.150 9.600M5.600 9.700h5.500" stroke="#333" stroke-width="1.900" fill="none" stroke-linejoin="miter"/><rect x=".2" y="13.700" width="15.600" height="2" fill="#8c8c8c"/></svg>
<svg class="ic" style="left:831px;top:196px" width="16" height="16" viewBox="0 0 16 16"><rect x=".1" y=".1" width="15.900" height="15.600" fill="#a8a8a8"/><path d="M4.200 12.900L8.350 3.300l4.150 9.600M5.600 9.700h5.500" stroke="#333" stroke-width="1.900" fill="none" stroke-linejoin="miter"/><rect x=".1" y="13.700" width="15.900" height="2" fill="#8c8c8c"/></svg>
<div class="cr" style="left:807.5px;top:201px"></div>
<div class="cr" style="left:855.5px;top:201px"></div>
<svg class="ic" style="left:883px;top:196px" width="16" height="16" viewBox="0 0 16 16"><path d="M7.400 1.100h7v1.700h-.9v12h-2V2.800H10v12H8V8.600H7.400a3.900 3.750 0 0 1 0-7.500z" fill="#333"/><path d="M.5 7.400v6.600l3.700-3.300z" fill="#333"/></svg>
<svg class="ic" style="left:919px;top:196px" width="16" height="16" viewBox="0 0 16 16"><g transform="translate(-3 0)"><path d="M7.400 1.100h7v1.700h-.9v12h-2V2.800H10v12H8V8.600H7.400a3.900 3.750 0 0 1 0-7.500z" fill="#333"/></g><path d="M15 7.400v6.600l-3.700-3.300z" fill="#333"/></svg>
<svg class="ic" style="left:959px;top:196px" width="16" height="16" viewBox="0 0 16 16"><text x="-.9" y="15.500" font-family="Liberation Serif" font-size="23.400" fill="#333">Ω</text></svg>
<svg class="ic" style="left:999px;top:196px" width="16" height="16" viewBox="0 0 16 16"><path d="M7.300 4.200L2.300 7.900l5 3.800M9.600 4.200l5 3.700-5 3.800" stroke="#333" stroke-width="1.800" fill="none"/></svg>
<svg class="ic" style="left:263px;top:228px" width="16" height="16" viewBox="0 0 16 16"><rect x="0" y="1" width="16" height="14" fill="#333"/><g fill="#fff"><rect x="1" y="3.300" width="4" height="3"/><rect x="6" y="3.300" width="4" height="3"/><rect x="11" y="3.300" width="4" height="3"/><rect x="1" y="7.300" width="4" height="3"/><rect x="6" y="7.300" width="4" height="3"/><rect x="11" y="7.300" width="4" height="3"/><rect x="1" y="11.300" width="4" height="2.700"/><rect x="6" y="11.300" width="4" height="2.700"/><rect x="11" y="11.300" width="4" height="2.700"/></g></svg>
<div class="cr" style="left:285px;top:233px"></div>
<svg class="ic" style="left:687px;top:228px" width="16" height="16" viewBox="0 0 16 16"><rect x="1.500" y="1.500" width="13" height="13" rx="2" fill="#c8d400"/><path d="M4.200 8.300l2.600 3 5-7" stroke="#3c5a00" stroke-width="1.500" fill="none"/></svg>
<svg class="ic" style="left:723px;top:228px" width="16" height="16" viewBox="0 0 16 16"><rect x="1.500" y="1.500" width="13" height="13" rx="2" fill="#dc3a14"/><path d="M4.300 4.300l7.400 7.400M11.700 4.300l-7.400 7.400" stroke="#fff" stroke-width="1.500" fill="none"/></svg><!--ICONS_END-->
<div class="lb" style="left:317px;top:224px">Absatz</div><div class="cr" style="left:413px;top:233px"></div>
<div class="lb" style="left:439px;top:224px">Schriftart</div><div class="cr" style="left:535.300px;top:233px"></div>
<div class="lb" style="left:561px;top:224px">Schriftgröße</div><div class="cr" style="left:657px;top:233px"></div>
<div id="ed">
<p style="top:264px">Wer gerne in Frankreich abseits vom Massentourismus unterwegs ist, der ist bei dieser Reise in die <a>Cevennen</a> genau richtig.</p>
<p style="top:288px">Hier finden wir noch die kleinen Straßen, die sich an Flüssen entlang durch endlos scheinende Wälder schlängeln. Manchmal fragt man sich, warum es hier überhaupt<br>Straßen gibt, so ausgestorben wirken manche Gegenden.</p>
<p style="top:325px">Diese Reise ist in den <a>Schwierigkeitsgrad</a> 3 eingeordnet.</p>
<p style="top:349px">Einige Tagesetappen sind allerdings etwas länger und daher benötigst Du entsprechendes "Sitzfleisch".</p>
</div>
<div id="sbar" class="a"></div>
<div class="a" style="left:260px;top:723px;font-size:14px;line-height:20px;color:#333">p</div>
<!-- red ring -->
<svg class="a" style="left:664px;top:200px" width="110" height="70" viewBox="670 315 110 70" shape-rendering="crispEdges"><path d="M702 325.500L749.900 325.500L754.300 328.400L758.300 331.200L759.900 336.800L762.400 340L762.400 356.100L760.300 361.700L758.400 368.100L756 371.700L752.700 376.100L751.500 378.400L709 378.400L700.800 374.500L692.400 369.300L684 360.900L680.800 354.100L679.100 348.100L678.700 340L679.500 334.800L683.200 331.200L691.200 328.800L700.600 327.900Z" fill="none" stroke="#ff0000" stroke-width="5.400" stroke-linejoin="round"/></svg>

</div>
<!-- frame -->
<div class="a" style="left:0;top:0;width:1px;height:874px;background:#0d3a72"></div>
<div class="a" style="left:1px;top:1px;width:1px;height:873px;background:#3a8ae6"></div><div class="a" style="left:2px;top:29px;width:1px;height:843px;background:#dbd5ce"></div><div class="a" style="left:1090px;top:29px;width:1px;height:843px;background:#dbd5ce"></div><div class="a" style="left:2px;top:871px;width:1089px;height:1px;background:#dbd5ce"></div>
<div class="a" style="left:1092px;top:0;width:1px;height:874px;background:#0b2f5e"></div>
<div class="a" style="left:1091px;top:1px;width:1px;height:872px;background:#3a8ae6"></div>
<div class="a" style="left:0;top:873px;width:1093px;height:1px;background:#0b2f5e"></div>
<div class="a" style="left:1px;top:872px;width:1091px;height:1px;background:#3a8ae6"></div>
</div>
</body></html>
